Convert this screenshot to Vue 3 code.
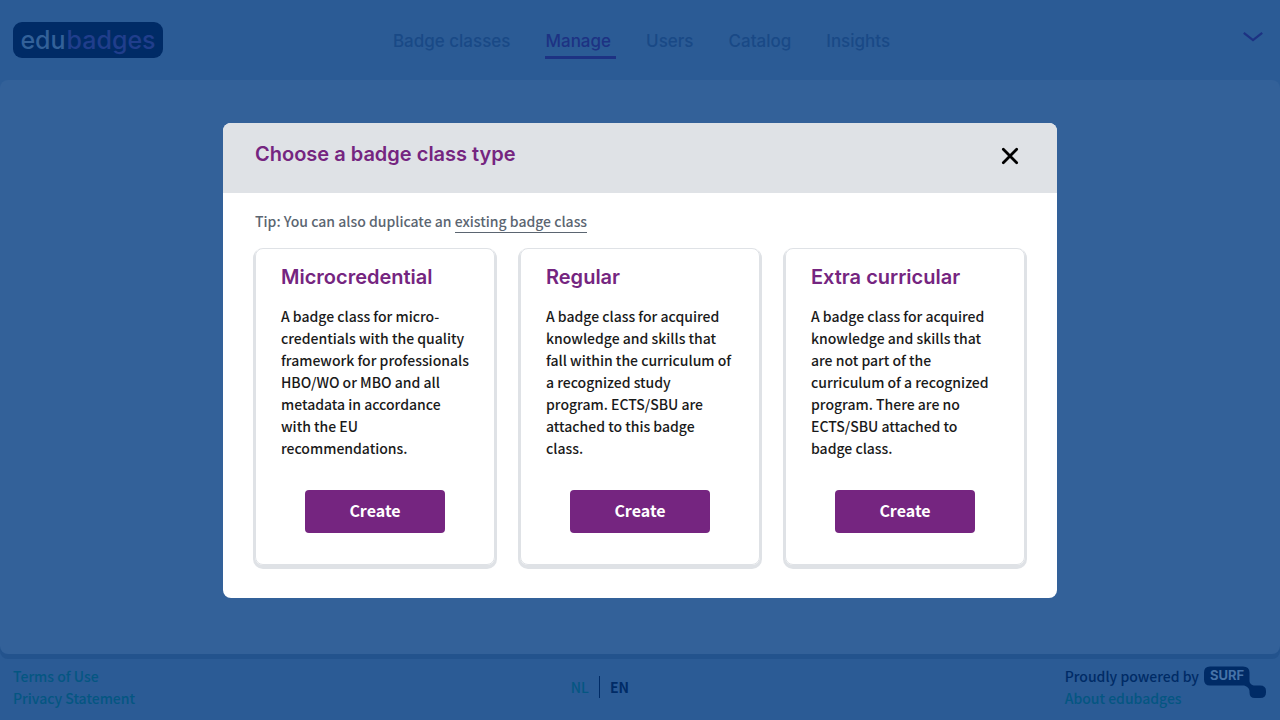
<script setup>
import { ref } from 'vue'

const navItems = ['Badge classes', 'Manage', 'Users', 'Catalog', 'Insights']
const activeItem = 'Manage'
const open = ref(true)

const types = [
  {
    title: 'Microcredential',
    text: 'A badge class for micro-credentials with the quality framework for professionals HBO/WO or MBO and all metadata in accordance with the EU recommendations.'
  },
  {
    title: 'Regular',
    text: 'A badge class for acquired knowledge and skills that fall within the curriculum of a recognized study program. ECTS/SBU are attached to this badge class.'
  },
  {
    title: 'Extra curricular',
    text: 'A badge class for acquired knowledge and skills that are not part of the curriculum of a recognized program. There are no ECTS/SBU attached to badge class.'
  }
]
</script>

<template>
  <div class="page">
    <header class="topbar">
      <a class="logo" href="#" aria-label="edubadges"><span>edu</span><span class="logo-accent">badges</span></a>
      <nav class="nav">
        <a v-for="item in navItems" :key="item" href="#" :class="{ active: item === activeItem }">{{ item }}</a>
      </nav>
      <button class="account" type="button" aria-label="Account menu">
        <svg width="20" height="10" viewBox="0 0 20 10" fill="none" stroke="currentColor" stroke-width="2.2">
          <path d="M0.8 0.9 L10 8.2 L19.2 0.9" />
        </svg>
      </button>
    </header>

    <main class="content"></main>

    <footer class="footer">
      <div class="links">
        <a href="#">Terms of Use</a>
        <a href="#">Privacy Statement</a>
      </div>
      <div class="languages">
        <a href="#">NL</a>
        <span class="current">EN</span>
      </div>
      <div class="powered">
        <div class="links">
          <span>Proudly powered by</span>
          <a href="#">About edubadges</a>
        </div>
        <svg class="surf" width="64" height="34" viewBox="0 0 64 34" role="img" aria-label="SURF">
          <path fill="#002b66" d="M7 1.5H40Q46.5 1.500 46.5 7.5V15.5C46.5 19 49 20.5 52 20.5H57Q63 20.5 63 26V27.5Q63 33 57 33H52Q46.5 33 46.5 27.5V26.5C46.5 23 43 20.5 40 20.5H7Q1 20.5 1 14.5V7.5Q1 1.5 7 1.5Z" />
          <text x="24" y="15" text-anchor="middle">SURF</text>
        </svg>
      </div>
    </footer>

    <div v-if="open" class="overlay">
      <section class="modal" role="dialog" aria-modal="true" aria-labelledby="modal-title">
        <div class="modal-header">
          <h2 id="modal-title">Choose a badge class type</h2>
          <button class="close" type="button" aria-label="Close" @click="open = false">
            <svg width="18" height="18" viewBox="0 0 18 18" fill="none" stroke="#000" stroke-width="2.8" stroke-linecap="round">
              <path d="M2.3 2.3 L15.7 15.7 M15.7 2.3 L2.3 15.7" />
            </svg>
          </button>
        </div>
        <div class="modal-body">
          <p class="tip">Tip: You can also duplicate an <a href="#">existing badge class</a></p>
          <div class="cards">
            <article v-for="type in types" :key="type.title" class="card">
              <h3>{{ type.title }}</h3>
              <p>{{ type.text }}</p>
              <button class="create" type="button">Create</button>
            </article>
          </div>
        </div>
      </section>
    </div>
  </div>
</template>

<style>
body {
  margin: 0;
  background: #2b5b95;
}
</style>

<style scoped>
* {
  box-sizing: border-box;
}

.page {
  display: flex;
  flex-direction: column;
  min-height: 100vh;
  font-family: "Noto Sans CJK SC", "Noto Sans", sans-serif;
  font-size: 14px;
  font-weight: 500;
  line-height: 22px;
  color: #002b66;
}

h2,
h3,
p {
  margin: 0;
}

a {
  color: inherit;
  text-decoration: none;
}

button {
  padding: 0;
  border: 0;
  background: none;
  font: inherit;
  cursor: pointer;
}

svg {
  display: block;
}

.topbar {
  display: grid;
  grid-template-columns: 1fr auto 1fr;
  align-items: center;
  height: 80px;
  padding: 0 17px 0 13px;
}

.logo {
  display: flex;
  gap: 1px;
  justify-content: center;
  align-items: center;
  justify-self: start;
  width: 150px;
  height: 36px;
  border-radius: 9px;
  background: #002b66;
  color: #336199;
  font-family: Inter, sans-serif;
  font-size: 25px;
}

.logo-accent {
  color: #203e8c;
}

.nav {
  display: flex;
  gap: 30px;
  margin-left: 12px;
  font-family: Inter, sans-serif;
  font-size: 17px;
  font-weight: 500;
  color: #194986;
}

.nav a {
  height: 38px;
  padding: 9px 5px 0 0;
  border-bottom: 3px solid transparent;
}

.nav .active {
  border-color: #1d3283;
  color: #1d3283;
}

.account {
  justify-self: end;
  margin-bottom: 6px;
  color: #1d3283;
}

.content {
  flex: 1;
  border-radius: 8px;
  background: #336199;
  box-shadow: 0 5px 0 #23538d;
}

.footer {
  display: flex;
  justify-content: space-between;
  align-items: center;
  height: 66px;
  padding: 0 13px;
}

.links {
  display: flex;
  flex-direction: column;
}

.footer a {
  color: #045682;
}

.languages {
  display: flex;
  gap: 10px;
}

.languages .current {
  padding-left: 10px;
  border-left: 1px solid #002b66;
  font-weight: 700;
}

.powered {
  display: flex;
  gap: 4px;
}

.surf text {
  fill: #4673a8;
  font-family: Inter, sans-serif;
  font-size: 13px;
  font-weight: 700;
}

.overlay {
  position: fixed;
  inset: 0;
  display: flex;
  align-items: center;
  justify-content: center;
}

.modal {
  width: 834px;
  max-width: 100%;
  overflow: hidden;
  border-radius: 8px;
  background: #fff;
}

.modal-header {
  display: flex;
  justify-content: space-between;
  align-items: center;
  height: 70px;
  padding: 0 38px 8px 32px;
  background: #dfe2e6;
}

.close {
  padding-top: 4px;
}

h2,
h3 {
  color: #752580;
  font-family: Inter, sans-serif;
  font-size: 20px;
  font-weight: 600;
  line-height: 24px;
}

.modal-body {
  padding: 17px 32px 33px;
}

.tip {
  margin-bottom: 16px;
  color: #5b6571;
}

.tip a {
  padding-bottom: 1px;
  border-bottom: 1px solid currentColor;
}

.cards {
  display: grid;
  grid-template-columns: repeat(3, 1fr);
  gap: 25px;
}

.card {
  display: flex;
  flex-direction: column;
  padding: 16px 25px 31px;
  border: 1px solid #dfe2e6;
  border-radius: 8px;
  box-shadow: 0 2px 0 2px #dfe2e6;
}

.card p {
  margin: 16px 0 31px;
  color: #1a1a1a;
}

.create {
  align-self: center;
  width: 140px;
  height: 43px;
  padding-bottom: 2px;
  margin-top: auto;
  border-radius: 4px;
  background: #752580;
  color: #fff;
  font-size: 16px;
  font-weight: 700;
}
</style>
